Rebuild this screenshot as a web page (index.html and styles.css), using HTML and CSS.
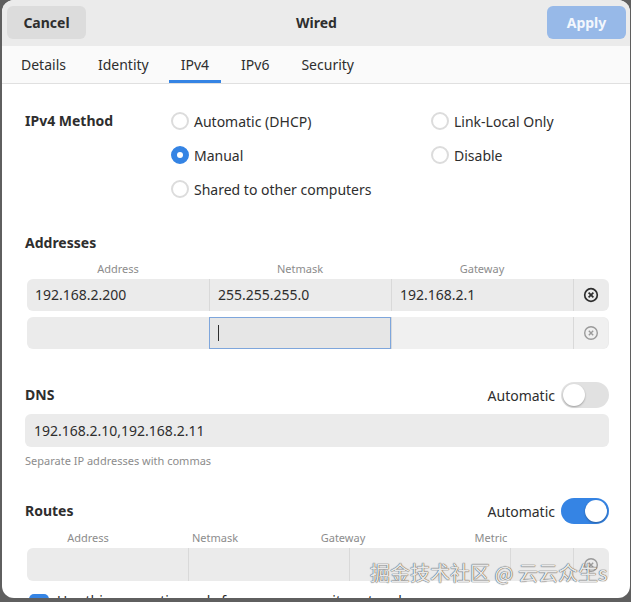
FILE: index.html
```html
<!DOCTYPE html>
<html lang="en">
<head>
<meta charset="utf-8">
<title>Wired</title>
<link rel="stylesheet" href="styles.css">
</head>
<body>
<div class="window">
  <header class="titlebar">
    <button class="btn cancel">Cancel</button>
    <div class="title">Wired</div>
    <button class="btn apply">Apply</button>
  </header>
  <nav class="tabs">
    <span class="tab">Details</span>
    <span class="tab">Identity</span>
    <span class="tab active">IPv4</span>
    <span class="tab">IPv6</span>
    <span class="tab">Security</span>
  </nav>
  <main class="content">
    <section class="method">
      <div class="heading">IPv4 Method</div>
      <div class="radios">
        <label class="radio"><span class="dot"></span>Automatic (DHCP)</label>
        <label class="radio"><span class="dot"></span>Link-Local Only</label>
        <label class="radio"><span class="dot checked"></span>Manual</label>
        <label class="radio"><span class="dot"></span>Disable</label>
        <label class="radio wide"><span class="dot"></span>Shared to other computers</label>
      </div>
    </section>

    <section class="addresses">
      <div class="heading">Addresses</div>
      <div class="grid addr-grid thead">
        <div class="th">Address</div><div class="th">Netmask</div><div class="th">Gateway</div><div class="th"></div>
      </div>
      <div class="grid addr-grid row">
        <div class="cell">192.168.2.200</div>
        <div class="cell">255.255.255.0</div>
        <div class="cell">192.168.2.1</div>
        <div class="cell del">
          <svg width="16" height="16" viewBox="0 0 16 16"><circle cx="8" cy="8" r="6.3" fill="none" stroke="#2e2e2e" stroke-width="1.7"/><path d="M5.6 5.6L10.4 10.4M10.4 5.6L5.6 10.4" stroke="#2e2e2e" stroke-width="1.7"/></svg>
        </div>
      </div>
      <div class="grid addr-grid row row2">
        <div class="cell"></div>
        <div class="cell focus"><span class="caret"></span></div>
        <div class="cell light"></div>
        <div class="cell del light">
          <svg width="16" height="16" viewBox="0 0 16 16"><circle cx="8" cy="8" r="6.3" fill="none" stroke="#9a9a9a" stroke-width="1.4"/><path d="M5.8 5.8L10.2 10.2M10.2 5.8L5.8 10.2" stroke="#9a9a9a" stroke-width="1.4"/></svg>
        </div>
      </div>
    </section>

    <section class="dns">
      <div class="bar">
        <div class="heading">DNS</div>
        <div class="auto">Automatic <span class="switch"><span class="knob"></span></span></div>
      </div>
      <div class="entry">192.168.2.10,192.168.2.11</div>
      <div class="help">Separate IP addresses with commas</div>
    </section>

    <section class="routes">
      <div class="bar">
        <div class="heading">Routes</div>
        <div class="auto">Automatic <span class="switch on"><span class="knob"></span></span></div>
      </div>
      <div class="grid route-head thead">
        <div class="th">Address</div><div class="th">Netmask</div><div class="th">Gateway</div><div class="th">Metric</div>
      </div>
      <div class="grid route-grid row">
        <div class="cell"></div><div class="cell"></div><div class="cell"></div><div class="cell"></div>
        <div class="cell del">
          <svg width="16" height="16" viewBox="0 0 16 16"><circle cx="8" cy="8" r="6.3" fill="none" stroke="#9a9a9a" stroke-width="1.4"/><path d="M5.8 5.8L10.2 10.2M10.2 5.8L5.8 10.2" stroke="#9a9a9a" stroke-width="1.4"/></svg>
        </div>
      </div>
      <label class="check"><span class="box"></span>Use this connection only for resources on its network</label>
    </section>
  </main>
</div>
<div class="watermark">掘金技术社区 @ 云云众生s</div>
</body>
</html>
```

FILE: styles.css
```css
* { box-sizing: border-box; }
html, body { margin: 0; padding: 0; }
body {
  width: 631px;
  height: 602px;
  overflow: hidden;
  background: #5f5f5f;
  font-family: "Noto Sans", "Open Sans", sans-serif;
  color: #2e2e2e;
  position: relative;
}
.window {
  margin: 0 0 0 2px;
  width: 628px;
  height: 598px;
  border-radius: 12px;
  overflow: hidden;
  background: #ffffff;
}
.titlebar {
  height: 46px;
  background: #ebebeb;
  display: flex;
  align-items: center;
  justify-content: space-between;
  padding: 0 4px 1px 5px;
}
.btn {
  border: none;
  border-radius: 6px;
  height: 33px;
  width: 79px;
  font-family: inherit;
  font-size: 14px;
  font-weight: 700;
}
.cancel { background: #dcdcdc; color: #2e2e2e; }
.apply { background: #97b9e8; color: #f3f7fd; }
.title { font-size: 14px; font-weight: 700; }

.tabs {
  height: 38px;
  background: #fafafa;
  border-bottom: 1px solid #e0e0e0;
  display: flex;
  gap: 8px;
  padding-left: 7px;
}
.tab {
  padding: 0 12px;
  font-size: 14px;
  line-height: 37px;
  color: #2e2e2e;
  position: relative;
}
.tab.active::after {
  content: "";
  position: absolute;
  left: 0; right: 0; bottom: 0;
  height: 3px;
  background: #3584e4;
}

.content { padding: 20px 21px 0 23px; }
.heading { font-size: 14px; font-weight: 700; line-height: 20px; }

.method { display: flex; }
.method .heading { width: 146px; padding-top: 7px; }
.radios {
  display: grid;
  grid-template-columns: 260px auto;
  grid-auto-rows: 34px;
}
.radio {
  display: flex;
  align-items: center;
  gap: 5px;
  font-size: 14px;
}
.radio.wide { grid-column: 1 / span 2; }
.dot {
  width: 18px; height: 18px;
  border-radius: 50%;
  border: 2px solid #dcdcdc;
  background: #fff;
  flex: none;
  position: relative;
}
.dot.checked { background: #3584e4; border-color: #3584e4; }
.dot.checked::after {
  content: "";
  position: absolute;
  left: 4px; top: 4px;
  width: 6px; height: 6px;
  border-radius: 50%;
  background: #fff;
}

.addresses { margin-top: 27px; }
.grid { display: grid; margin-left: 2px; }
.addr-grid { grid-template-columns: 182px 182px 182px 35px; }
.route-grid { grid-template-columns: 161px 161px 161px 63px 35px; }
.route-head { grid-template-columns: 122px 132px 124px 172px; }
.addresses .thead { margin-top: 6px; }
.routes .thead { margin-top: 4px; }
.th {
  font-size: 11px;
  color: #8c8c8c;
  text-align: center;
  line-height: 14px;
  padding: 3px 0 3px;
}
.row {
  height: 32px;
  background: #ebebeb;
  border-radius: 6px;
  margin-bottom: 6px;
}
.routes .row { height: 33px; }
.cell {
  font-size: 14px;
  line-height: 32px;
  padding-left: 8px;
  border-left: 1px solid #d9d9d9;
  position: relative;
}
.cell:first-child { border-left: none; }
.cell.light { background: #f0f0f0; }
.row2 .cell.del { border-top-right-radius: 6px; border-bottom-right-radius: 6px; }
.cell.del {
  display: flex;
  align-items: center;
  justify-content: center;
  padding-left: 0;
}
.cell.focus {
  border: 1.5px solid #7ea6dc;
  background: #e6e6e6;
}
.caret {
  position: absolute;
  left: 8px; top: 7px;
  width: 1px; height: 16px;
  background: #2e2e2e;
}

.dns { margin-top: 33px; }
.bar {
  display: flex;
  justify-content: space-between;
  align-items: center;
  height: 26px;
}
.auto {
  display: flex;
  align-items: center;
  gap: 6px;
  font-size: 14px;
}
.switch {
  width: 48px; height: 26px;
  border-radius: 13px;
  background: #e1e1e1;
  position: relative;
}
.switch .knob {
  position: absolute;
  top: 2px; left: 2px;
  width: 22px; height: 22px;
  border-radius: 50%;
  background: #fff;
  box-shadow: 0 1px 2px rgba(0,0,0,0.3);
}
.switch.on { background: #3584e4; }
.switch.on .knob { left: 24px; }
.entry {
  margin-top: 6px;
  height: 33px;
  background: #ebebeb;
  border-radius: 6px;
  font-size: 14px;
  line-height: 33px;
  padding-left: 9px;
}
.help {
  font-size: 11px;
  color: #8c8c8c;
  margin-top: 6px;
}

.routes { margin-top: 30px; }
.check {
  display: flex;
  align-items: flex-start;
  gap: 8px;
  font-size: 14px;
  line-height: 14px;
  margin-top: 13px;
  margin-left: 4px;
}
.box {
  width: 20px; height: 20px;
  border-radius: 5px;
  background: #3584e4;
  flex: none;
}

.watermark {
  position: absolute;
  left: 370px;
  top: 558px;
  font-family: "Noto Sans CJK SC", sans-serif;
  font-size: 20px;
  color: rgba(255,255,255,0.9);
  text-shadow: 0 0 1px #444, 0 0 1px #444;
}
```
